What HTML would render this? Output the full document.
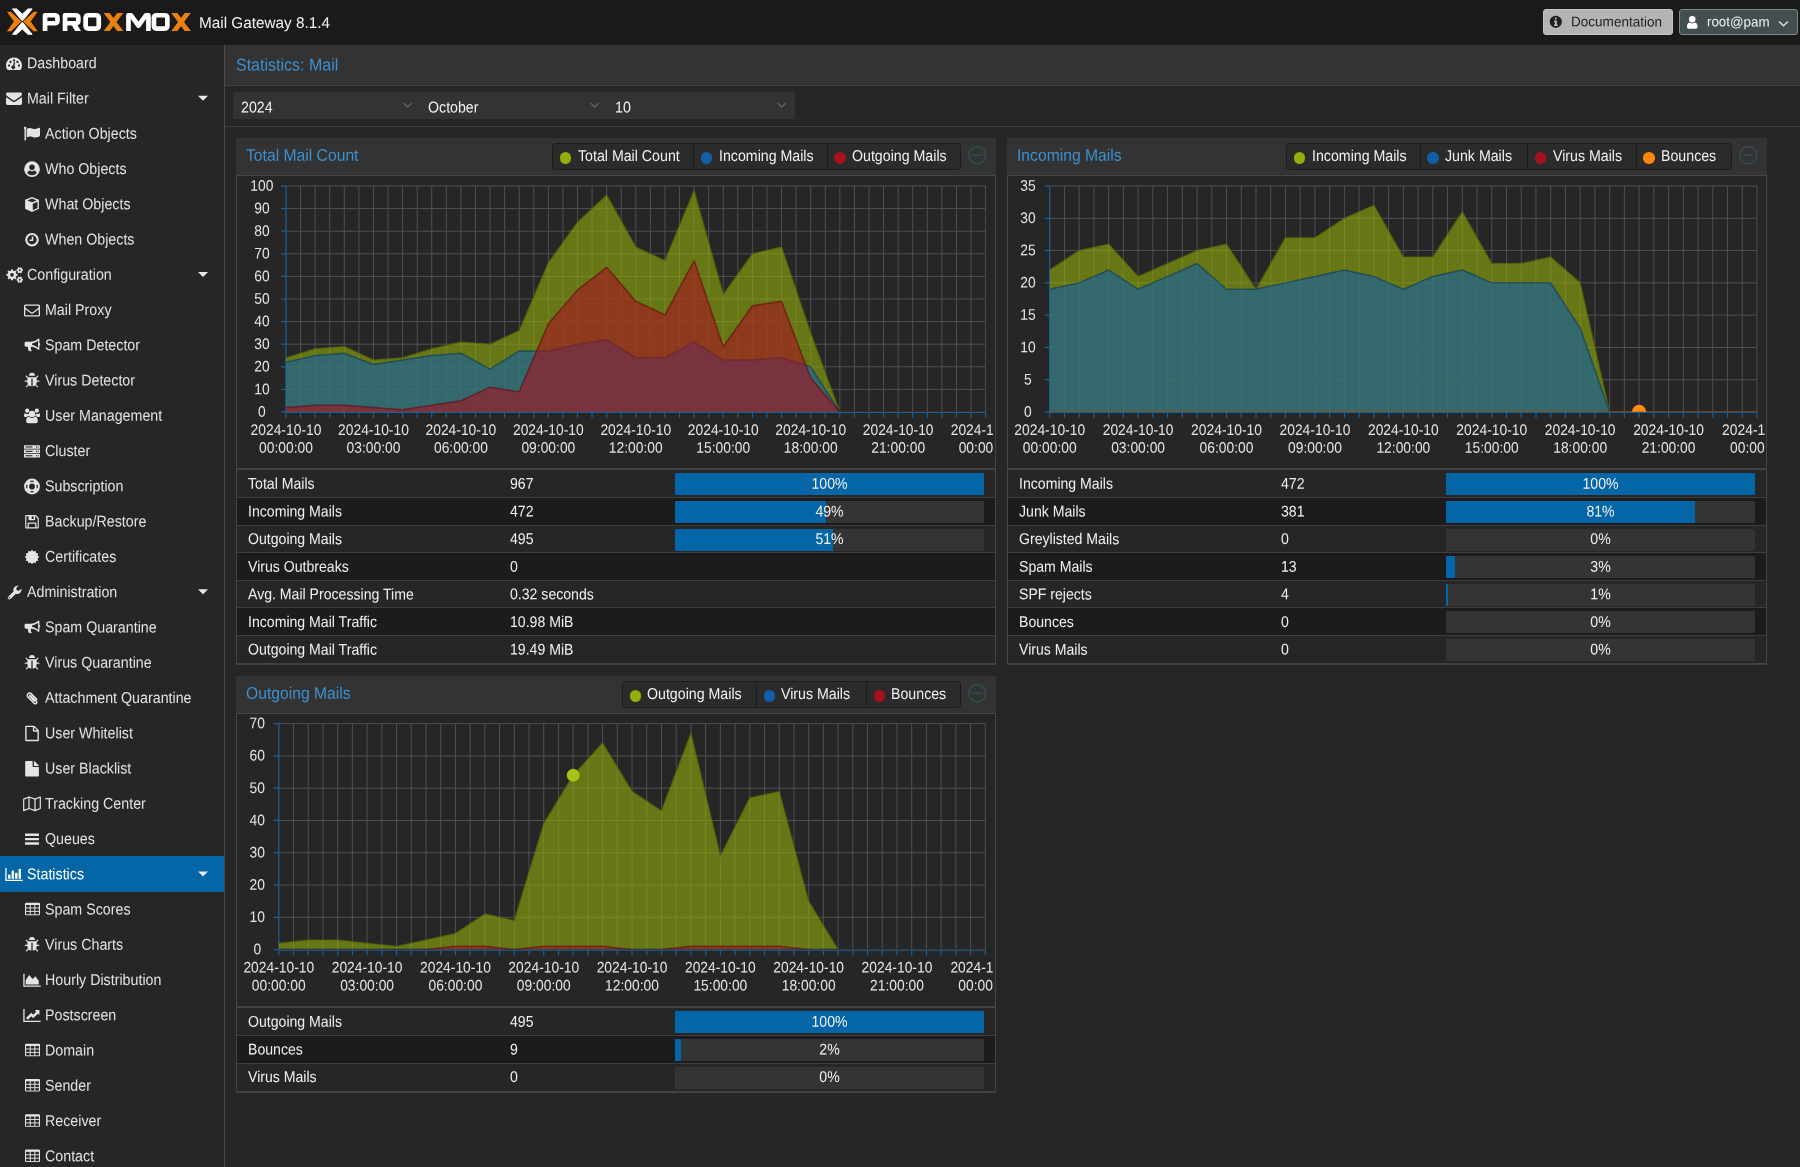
<!DOCTYPE html>
<html><head><meta charset="utf-8"><title>Proxmox Mail Gateway</title>
<style>
*{box-sizing:border-box;margin:0;padding:0}
html,body{width:1800px;height:1167px;overflow:hidden;background:#262626;font-family:"Liberation Sans",sans-serif;color:#f0f0f0}
body{position:relative;will-change:transform}
.ic{position:absolute;display:block;overflow:visible}
#hdr{position:absolute;left:0;top:0;width:1800px;height:45px;background:#1a1a1a}
#logo{position:absolute;left:0;top:0}
#ver{position:absolute;left:199px;top:13.2px;font-size:15.3px;line-height:18px;color:#f2f2f2;white-space:nowrap}
.btn{position:absolute;top:9px;height:26.4px;border-radius:3px;font-size:13.9px;line-height:24.4px;white-space:nowrap}
.btn span{position:absolute;top:0}
.btn.doc{left:1543.3px;width:130px;background:#b4b4b4;border:1px solid #c4c4c4;color:#1e1e1e}
.btn.doc span{left:27px;font-size:13.55px}
.btn.usr{left:1679.3px;width:119px;background:#434e51;border:1px solid #7f898b;color:#f0f0f0}
.btn.usr span{left:26.5px;font-size:13.35px}
.chev{position:absolute;left:98px;top:10px;width:11px;height:7.6px}
#side{position:absolute;left:0;top:0;width:224px;height:1167px}
#sideb{position:absolute;left:224px;top:45px;width:1.2px;height:1122px;background:#4a4a4a}
.row{position:absolute;left:0;width:224px;font-size:14.25px;color:#e2e2e2}
.row.sel{background:#0466a6;color:#fff}
.row .lbl{position:absolute;top:1px;line-height:35px;height:35px;white-space:nowrap}
.row .exp{position:absolute;left:198px;top:15.2px;width:0;height:0;border-left:5.6px solid transparent;border-right:5.6px solid transparent;border-top:5.6px solid #e8e8e8}
#ttl{position:absolute;left:225px;top:45px;width:1575px;height:41px;background:#333333;border-bottom:1px solid #424242}
#ttl span{position:absolute;left:10.7px;top:11.1px;font-size:16px;line-height:20px;color:#3c90d0;white-space:nowrap}
#tb{position:absolute;left:225px;top:86px;width:1575px;height:41px;background:#262626;border-bottom:1px solid #3e3e3e}
.combo{position:absolute;top:6.2px;width:187.3px;height:26.8px;background:#333333;font-size:14.2px;line-height:26.6px;color:#f0f0f0}
.combo span{position:absolute;left:7.4px;top:2.1px}
.trg{position:absolute;left:169.6px;top:9.6px;width:9.4px;height:6.6px}
.panel{position:absolute;background:#262626;overflow:hidden}
.ph{position:absolute;left:0;top:0;right:0;height:36.6px;background:#333333}
.pttl{position:absolute;left:9.6px;top:8.6px;font-size:15.7px;line-height:19px;color:#3c90d0;white-space:nowrap}
.tool{position:absolute;right:8.3px;top:7.3px;width:20.4px;height:20.4px}
.legend{position:absolute;height:27.2px;display:flex;background:#2b2b2b;border:1px solid #1c1c1c;border-radius:3.5px}
.li{position:relative;height:100%;border-right:1px solid #1c1c1c}
.li:last-child{border-right:none}
.dot{position:absolute;left:6.8px;top:8.7px;width:11.4px;height:11.4px;border-radius:50%}
.lt{position:absolute;left:24.7px;top:1px;font-size:14.2px;line-height:24.8px;color:#f0f0f0;white-space:nowrap}
.pbody{position:absolute;left:0;right:0;top:36.6px;bottom:0;border:1px solid #454545;border-bottom:2px solid #424242}
.sep{position:absolute;left:0;right:0;height:2px;background:#424242}
.chart{position:absolute;display:block;overflow:hidden}
.tk{font-family:"Liberation Sans",sans-serif;font-size:13.85px;fill:#e4e4e4}
.tr{position:absolute;left:1px;right:1px;background:#262626;border-top:1px solid #3e3e3e;font-size:14.1px;color:#f0f0f0}
.tr.alt{background:#1c1c1c}
.tr span{position:absolute;top:0;line-height:28px;height:28px;white-space:nowrap}
.c1{left:10.6px}.c2{left:272.3px}
.pb{position:absolute;left:437.6px;top:3px;width:309px;height:22px;background:#343434}
.pf{position:absolute;left:0;top:0;height:100%;background:#0466a6}
.pb .pt{left:0;right:0;text-align:center;top:-3px}

.tr.first{border-top-color:#424242}
.row .lbl,.tr span,.lt,.combo span,.btn span,#ver,#ttl span,.pttl{display:inline-block;transform-origin:50% 68%}
.lt{transform:matrix(1,0.0006,0,1.10,0,-1.0)}
.combo span{transform:matrix(1,0.0006,0,1.10,0,0.5)}
.btn span{transform:matrix(1,0.0006,0,1.03,0,0.4)}
#ver{transform:matrix(1,0.0006,0,1.02,0,0.9)}
#ttl span{transform:matrix(1,0.0006,0,1.065,0,-0.5)}
.pttl{transform:matrix(1,0.0006,0,1.065,0,-1.4)}
.tk{transform-box:fill-box;transform-origin:50% 85%;transform:matrix(1,0.0006,0,1.11,0,0)}

</style></head>
<body>
<div id="hdr"><svg id="logo" width="200" height="45" viewBox="0 0 200 45">
<g fill="#ffffff" stroke="#ffffff" stroke-width="1" stroke-linejoin="round">
<path d="M12.5 8.9H16.6L22.3 14.2L28 8.9H32.1L22.3 21.2Z"/>
<path d="M12.5 34.3H16.6L22.3 29L28 34.3H32.1L22.3 22Z"/>
</g>
<g fill="#e9800f" stroke="#2a1400" stroke-width="0.8" stroke-linejoin="round">
<path d="M7 11.4H11L22 21.55L11 31.7H7Q6.200 31.700 6.700 31L13.5 21.55L6.700 12.100Q6.200 11.400 7 11.400Z"/>
<path d="M37.600 11.400H33.600L22.600 21.550L33.600 31.700H37.600Q38.400 31.700 37.900 31L31.100 21.550L37.900 12.100Q38.400 11.400 37.600 11.400Z"/>
</g>
<g fill="none" stroke="#ffffff" stroke-width="4.700" stroke-linejoin="round" stroke-linecap="butt">
<path d="M45.050 31V15.250H54.600Q57.450 15.250 57.450 18V20.500Q57.450 23.250 54.600 23.250H45.050"/>
<path d="M65.050 31V15.250H75.500Q78.350 15.250 78.350 18V20.500Q78.350 23.250 75.500 23.250H65.050"/>
<path d="M88.450 15.250H95.950Q98.750 15.250 98.750 18.050V25.850Q98.750 28.650 95.950 28.650H88.450Q85.650 28.650 85.650 25.850V18.050Q85.650 15.250 88.450 15.250Z"/>
<path d="M128.450 31V15.250H131L138.450 25.600L145.900 15.250H148.450V31"/>
<path d="M156.750 15.250H164.550Q167.350 15.250 167.350 18.050V25.850Q167.350 28.650 164.550 28.650H156.750Q153.950 28.650 153.950 25.850V18.050Q153.950 15.250 156.750 15.250Z"/>
</g>
<path d="M70.500 23.250H76.300L81 31H75.200Z" fill="#ffffff"/>
<g fill="#e9800f">
<path d="M103.600 12.900H109.700L123.300 31H117.200Z"/><path d="M123.300 12.900H117.200L103.600 31H109.700Z"/>
<path d="M171.300 12.900H177.400L190.800 31H184.700Z"/><path d="M190.800 12.900H184.700L171.300 31H177.400Z"/>
</g>
</svg>
<span id="ver">Mail Gateway 8.1.4</span><div class="btn doc"><svg class="ic" style="left:4.6px;top:5.3px;width:13.60px;height:13.60px;" viewBox="0 0 16 16" fill="#1e1e1e" color="#1e1e1e" stroke="none"><circle cx="8" cy="8" r="7.200"/><g fill="#b4b4b4"><rect x="6.900" y="3.100" width="2.300" height="2.100"/><path d="M5.900 6.600h3.400v4.700h1v1.500H5.900v-1.500h1V8.100h-1z"/></g></svg><span>Documentation</span></div><div class="btn usr"><svg class="ic" style="left:4.8px;top:4.9px;width:14.50px;height:14.50px;" viewBox="0 0 16 16" fill="#ffffff" color="#ffffff" stroke="none"><circle cx="8" cy="4.600" r="3.600"/><path d="M2.100 13.300c0-2.400.7-5 3-5.100.7.600 1.700 1 2.900 1s2.200-.4 2.900-1c2.300.1 3 2.700 3 5.100 0 1.200-.8 1.900-2 1.900H4.100c-1.200 0-2-.7-2-1.900z"/></svg><span>root@pam</span><svg class="chev" viewBox="0 0 12 8"><path d="M1.2 1.5L6 6.2L10.8 1.5" fill="none" stroke="#e0e0e0" stroke-width="1.5"/></svg></div></div>
<div id="side"><div class="row" style="top:45px;height:36px"><svg class="ic" style="left:6px;top:9.6px;width:16.00px;height:16.00px;transform:translateY(0.40px);" viewBox="0 0 16 16" fill="#e4e4e4" color="#e4e4e4" stroke="none"><path d="M8 2.2C3.6 2.2 0 5.7 0 10.1c0 1.5 .4 2.9 1.2 4.1 .2 .3 .5 .5 .9 .5h11.8c.4 0 .7-.2 .9-.5 .8-1.2 1.2-2.6 1.200-4.100C16 5.700 12.400 2.200 8 2.200z"/><g fill="#262626"><circle cx="3" cy="10.200" r="1.150"/><circle cx="4.500" cy="6.600" r="1.150"/><circle cx="8" cy="5" r="1.150"/><circle cx="11.500" cy="6.600" r="1.150"/><circle cx="13" cy="10.200" r="1.150"/><path d="M9.300 6.800l-1 3.600a1.800 1.800 0 1 1-1.300-.3l1-3.600z"/></g></svg><span class="lbl" style="left:27px;transform:matrix(1,0.0006,0,1.10,0,0.40)">Dashboard</span></div>
<div class="row" style="top:80px;height:36px"><svg class="ic" style="left:6px;top:9.6px;width:16.00px;height:16.00px;transform:translateY(0.66px);" viewBox="0 0 16 16" fill="#e4e4e4" color="#e4e4e4" stroke="none"><path d="M0 4.100c0-.9.700-1.600 1.600-1.600h12.800c.9 0 1.600.7 1.600 1.600 0 .9-.6 1.700-1.300 2.200L9.600 9.800c-.4.300-1.100.8-1.600.8s-1.200-.5-1.600-.8L1.300 6.300C.7 5.900 0 5 0 4.100zM16 7v6.400c0 .9-.700 1.600-1.600 1.600H1.600C.700 15 0 14.300 0 13.400V7c.3.300.6.600 1 .8l4.700 3.300c.7.500 1.500 1 2.300 1s1.600-.5 2.300-1L15 7.800c.4-.200.700-.500 1-.8z" transform="translate(0,-.7)"/></svg><span class="lbl" style="left:27px;transform:matrix(1,0.0006,0,1.10,0,0.66)">Mail Filter</span><span class="exp" style="transform:translateY(0.66px)"></span></div>
<div class="row" style="top:115px;height:36px"><svg class="ic" style="left:24px;top:9.6px;width:16.00px;height:16.00px;transform:translateY(0.92px);" viewBox="0 0 16 16" fill="#e4e4e4" color="#e4e4e4" stroke="none"><circle cx="1.2" cy="2.1" r="1.25"/><rect x=".5" y="2.1" width="1.45" height="12.5" rx=".4"/><path d="M2.7 3.1c2-1.300 3.700-1.200 5.300-.5 1.900.800 3.900.900 6.900-.7.600-.3 1.100 0 1.100.6v7.100c0 .5-.3.800-.7 1-2.600 1.300-4.800 1.300-6.800.5-1.800-.7-3.500-.700-5.800.6z"/></svg><span class="lbl" style="left:45px;transform:matrix(1,0.0006,0,1.10,0,0.92)">Action Objects</span></div>
<div class="row" style="top:151px;height:35px"><svg class="ic" style="left:24px;top:9.6px;width:16.00px;height:16.00px;transform:translateY(0.18px);" viewBox="0 0 16 16" fill="#e4e4e4" color="#e4e4e4" stroke="none"><circle cx="8" cy="8" r="7.85"/><circle cx="8" cy="6.1" r="2.75" fill="#262626"/><path d="M3.3 11.900c.4-1.500 1.300-2.400 2.600-2.500.6.500 1.300.800 2.100.8s1.500-.3 2.100-.8c1.300.1 2.200 1 2.600 2.500a6.100 6.100 0 0 1-9.400 0z" fill="#262626"/></svg><span class="lbl" style="left:45px;transform:matrix(1,0.0006,0,1.10,0,0.18)">Who Objects</span></div>
<div class="row" style="top:186px;height:36px"><svg class="ic" style="left:24px;top:9.6px;width:16.00px;height:16.00px;transform:translateY(0.44px);" viewBox="0 0 16 16" fill="#e4e4e4" color="#e4e4e4" stroke="none"><path d="M8 .6l6.900 2.800v8.900L8 15.500 1.100 12.300V3.400z"/><path d="M8 2.100l4.700 1.900L8 5.900 3.300 4z" fill="#262626"/><path d="M8.800 7.300l4.700-1.900v6.100l-4.700 2.200z" fill="#262626"/></svg><span class="lbl" style="left:45px;transform:matrix(1,0.0006,0,1.10,0,0.44)">What Objects</span></div>
<div class="row" style="top:221px;height:36px"><svg class="ic" style="left:24px;top:9.6px;width:16.00px;height:16.00px;transform:translateY(0.70px);" viewBox="0 0 16 16" fill="#e4e4e4" color="#e4e4e4" stroke="none"><path fill-rule="evenodd" d="M8 1.200a6.800 6.800 0 1 1 0 13.600A6.800 6.800 0 0 1 8 1.200zm0 2.100a4.700 4.700 0 1 0 0 9.400A4.700 4.700 0 0 0 8 3.300zm-.2 1.400h1.500v4.500H5.600V7.700h2.200z"/></svg><span class="lbl" style="left:45px;transform:matrix(1,0.0006,0,1.10,0,0.70)">When Objects</span></div>
<div class="row" style="top:256px;height:36px"><svg class="ic" style="left:5.8px;top:9.6px;width:17.00px;height:16.00px;transform:translateY(0.96px);" viewBox="0 0 17 16" fill="#e4e4e4" color="#e4e4e4" stroke="none"><circle cx="6" cy="7.9" r="4.0"/><path d="M9.87 6.87L11.42 6.83L11.42 8.97L9.87 8.93L9.46 9.91L10.58 10.98L9.08 12.48L8.01 11.36L7.03 11.77L7.07 13.32L4.93 13.32L4.97 11.77L3.99 11.36L2.92 12.48L1.42 10.98L2.54 9.91L2.13 8.93L0.58 8.97L0.58 6.83L2.13 6.87L2.54 5.89L1.42 4.82L2.92 3.32L3.99 4.44L4.97 4.03L4.93 2.48L7.07 2.48L7.03 4.03L8.01 4.44L9.08 3.32L10.58 4.82L9.46 5.89Z"/><circle cx="6" cy="7.9" r="1.85" fill="#262626"/><circle cx="13.75" cy="3.2" r="2.25"/><path d="M15.84 2.37L16.88 2.29L16.88 4.11L15.84 4.03L15.51 4.60L16.10 5.46L14.53 6.37L14.08 5.43L13.42 5.43L12.97 6.37L11.40 5.46L11.99 4.60L11.66 4.03L10.62 4.11L10.62 2.29L11.66 2.37L11.99 1.80L11.40 0.94L12.97 0.03L13.42 0.97L14.08 0.97L14.53 0.03L16.10 0.94L15.51 1.80Z"/><circle cx="13.75" cy="3.2" r="0.95" fill="#262626"/><circle cx="13.75" cy="12.8" r="2.25"/><path d="M15.84 11.97L16.88 11.89L16.88 13.71L15.84 13.63L15.51 14.20L16.10 15.06L14.53 15.97L14.08 15.03L13.42 15.03L12.97 15.97L11.40 15.06L11.99 14.20L11.66 13.63L10.62 13.71L10.62 11.89L11.66 11.97L11.99 11.40L11.40 10.54L12.97 9.63L13.42 10.57L14.08 10.57L14.53 9.63L16.10 10.54L15.51 11.40Z"/><circle cx="13.75" cy="12.8" r="0.95" fill="#262626"/></svg><span class="lbl" style="left:27px;transform:matrix(1,0.0006,0,1.10,0,0.96)">Configuration</span><span class="exp" style="transform:translateY(0.96px)"></span></div>
<div class="row" style="top:292px;height:35px"><svg class="ic" style="left:24px;top:9.6px;width:16.00px;height:16.00px;transform:translateY(0.22px);" viewBox="0 0 16 16" fill="#e4e4e4" color="#e4e4e4" stroke="none"><path fill-rule="evenodd" d="M1.600 2.300h12.800c.9 0 1.600.7 1.600 1.600v8.800c0 .9-.700 1.600-1.600 1.600H1.600C.700 14.300 0 13.600 0 12.700V3.900c0-.9.700-1.600 1.600-1.600zM1.300 3.600v1c0 .5.300 1 .8 1.400L7 9.700c.6.400 1.400.4 2 0l4.900-3.700c.5-.4.800-.9.800-1.400v-1zM1.300 7.100v5.900h13.400V7.100l-5 3.700c-1 .8-2.400.8-3.400 0z"/></svg><span class="lbl" style="left:45px;transform:matrix(1,0.0006,0,1.10,0,0.22)">Mail Proxy</span></div>
<div class="row" style="top:327px;height:36px"><svg class="ic" style="left:24px;top:9.6px;width:16.00px;height:16.00px;transform:translateY(0.48px);" viewBox="0 0 16 16" fill="#e4e4e4" color="#e4e4e4" stroke="none"><path d="M14.500 1c.5 0 .9.400.900.9v3.600a1.300 1.300 0 0 1 0 2.400v3.600c0 .5-.4.900-.9.900-2.400-2-4.700-2.900-7.100-3.100-.8.300-.9 1-.4 1.600-.4.700.1 1.400.8 2-.5 1-2.200 1.100-3.100.4-.4-1.400-1.100-2.700-.7-4.100H1.900C1.200 9.200.6 8.700.6 8V5.400c0-.7.600-1.200 1.300-1.200h4.600c2.700 0 5.300-1 8-3.200z"/><path d="M14.100 3.200c-2 1.500-4 2.400-6 2.700v1.600c2 .3 4 1.200 6 2.700z" fill="#262626"/></svg><span class="lbl" style="left:45px;transform:matrix(1,0.0006,0,1.10,0,0.48)">Spam Detector</span></div>
<div class="row" style="top:362px;height:36px"><svg class="ic" style="left:24px;top:9.6px;width:16.00px;height:16.00px;transform:translateY(0.74px);" viewBox="0 0 16 16" fill="#e4e4e4" color="#e4e4e4" stroke="none"><g transform="translate(8 8) scale(1.07 1.05) translate(-8 -8.3)"><path d="M5.200 3.600a2.800 2.800 0 0 1 5.600 0zM15 8.700c0 .3-.3.600-.6.600h-2c0 1.100-.2 1.900-.6 2.500l1.900 1.900a.6.600 0 0 1-.8.800l-1.800-1.800c-.6.500-1.500 1-2.500 1V6.300H7.400v7.400c-1.100 0-2-.5-2.600-1L3.100 14.500a.6.600 0 0 1-.8-.8l1.900-2c-.3-.6-.5-1.400-.5-2.400h-2a.6.600 0 0 1 0-1.200h2V5.700L2.100 4.200a.6.600 0 0 1 .8-.8l1.500 1.500h7.200l1.500-1.500a.6.600 0 0 1 .8.800L12.400 5.700v2.400h2c.3 0 .6.300.6.600z"/></g></svg><span class="lbl" style="left:45px;transform:matrix(1,0.0006,0,1.10,0,0.74)">Virus Detector</span></div>
<div class="row" style="top:397px;height:36px"><svg class="ic" style="left:24px;top:9.6px;width:16.00px;height:16.00px;transform:translateY(1.00px);" viewBox="0 0 16 16" fill="#e4e4e4" color="#e4e4e4" stroke="none"><path d="M4.900 8c-.9 0-1.700.4-2.200 1.100H1.600C.7 9.100 0 8.700 0 7.800 0 7 0 5.200 1.200 5.200c.2 0 1.200.8 2.500.8.400 0 .9-.1 1.300-.2 0 .8.200 1.600.700 2.200zM13.800 13.300c0 1.300-.8 2-2.100 2H4.300c-1.200 0-2.100-.7-2.100-2 0-1.800.4-4.500 2.700-4.500.3 0 1.300 1.100 3.100 1.100s2.800-1.100 3.100-1.100c2.300 0 2.700 2.700 2.700 4.500zM5.300 2.700a2.100 2.100 0 1 1-4.200 0 2.100 2.100 0 0 1 4.200 0zM11.200 5.900a3.200 3.200 0 1 1-6.400 0 3.200 3.200 0 0 1 6.400 0zM16 7.800c0 .9-.7 1.300-1.600 1.300h-1.100C12.800 8.400 12 8 11.100 8c.4-.6.700-1.400.700-2.200.4.100.8.200 1.300.2 1.300 0 2.300-.8 2.500-.8C16 5.200 16 7 16 7.800zM14.900 2.700a2.100 2.100 0 1 1-4.200 0 2.100 2.100 0 0 1 4.200 0z"/></svg><span class="lbl" style="left:45px;transform:matrix(1,0.0006,0,1.10,0,1.00)">User Management</span></div>
<div class="row" style="top:433px;height:36px"><svg class="ic" style="left:24px;top:9.6px;width:16.00px;height:16.00px;transform:translateY(0.26px);" viewBox="0 0 16 16" fill="#e4e4e4" color="#e4e4e4" stroke="none"><rect x="0" y="1.900" width="16" height="3.600" rx=".5"/><rect x="0" y="6.300" width="16" height="3.600" rx=".5"/><rect x="0" y="10.700" width="16" height="3.600" rx=".5"/><g fill="#262626"><rect x="1.500" y="3.150" width="7" height="1.100"/><rect x="1.500" y="7.550" width="7" height="1.100"/><rect x="1.500" y="11.950" width="7" height="1.100"/><rect x="11.800" y="3.150" width="1.100" height="1.100"/><rect x="13.700" y="3.150" width="1.100" height="1.100"/><rect x="11.800" y="7.550" width="1.100" height="1.100"/><rect x="13.700" y="7.550" width="1.100" height="1.100"/><rect x="11.800" y="11.950" width="1.100" height="1.100"/><rect x="13.700" y="11.950" width="1.100" height="1.100"/></g></svg><span class="lbl" style="left:45px;transform:matrix(1,0.0006,0,1.10,0,0.26)">Cluster</span></div>
<div class="row" style="top:468px;height:36px"><svg class="ic" style="left:24px;top:9.6px;width:16.00px;height:16.00px;transform:translateY(0.52px);" viewBox="0 0 16 16" fill="#e4e4e4" color="#e4e4e4" stroke="none"><path fill-rule="evenodd" d="M8 .1a7.900 7.900 0 1 1 0 15.800A7.900 7.900 0 0 1 8 .1zm0 5a2.900 2.900 0 1 0 0 5.800 2.900 2.900 0 0 0 0-5.800z"/><g fill="#262626"><rect x="6.300" y="2.200" width="3.400" height="1.200"/><rect x="6.300" y="12.600" width="3.400" height="1.200"/><rect x="2.200" y="6.300" width="1.200" height="3.400"/><rect x="12.600" y="6.300" width="1.200" height="3.400"/></g></svg><span class="lbl" style="left:45px;transform:matrix(1,0.0006,0,1.10,0,0.52)">Subscription</span></div>
<div class="row" style="top:503px;height:36px"><svg class="ic" style="left:24px;top:9.6px;width:16.00px;height:16.00px;transform:translateY(0.78px);" viewBox="0 0 16 16" fill="#e4e4e4" color="#e4e4e4" stroke="none"><path fill-rule="evenodd" d="M2.100 1.300h9.100c.4 0 .9.200 1.200.5l1.900 1.900c.3.300.5.800.5 1.200v8.900c0 .5-.4.900-.9.900H2.100c-.5 0-.9-.4-.9-.9V2.200c0-.5.400-.9.900-.9zM2.400 2.500v11h1.200V9.700c0-.5.400-.9.900-.9h7c.5 0 .9.400.9.900v3.800h1.200V5c0-.2-.1-.4-.2-.5l-1.800-1.800c-.1-.1-.2-.2-.4-.2v3c0 .5-.4.900-.9.900H5.400c-.5 0-.9-.4-.9-.9v-3zM4.800 10v3.500h6.400V10zM7.700 2.500h1.900v2.700H7.700z"/></svg><span class="lbl" style="left:45px;transform:matrix(1,0.0006,0,1.10,0,0.78)">Backup/Restore</span></div>
<div class="row" style="top:539px;height:35px"><svg class="ic" style="left:24px;top:9.6px;width:16.00px;height:16.00px;transform:translateY(0.04px);" viewBox="0 0 16 16" fill="#e4e4e4" color="#e4e4e4" stroke="none"><path d="M8.00 0.70L9.48 2.49L11.65 1.68L12.03 3.97L14.32 4.35L13.51 6.52L15.30 8.00L13.51 9.48L14.32 11.65L12.03 12.03L11.65 14.32L9.48 13.51L8.00 15.30L6.52 13.51L4.35 14.32L3.97 12.03L1.68 11.65L2.49 9.48L0.70 8.00L2.49 6.52L1.68 4.35L3.97 3.97L4.35 1.68L6.52 2.49Z" stroke-linejoin="round"/></svg><span class="lbl" style="left:45px;transform:matrix(1,0.0006,0,1.10,0,0.04)">Certificates</span></div>
<div class="row" style="top:574px;height:36px"><svg class="ic" style="left:6px;top:9.6px;width:16.00px;height:16.00px;transform:translateY(0.30px);" viewBox="0 0 16 16" fill="#e4e4e4" color="#e4e4e4" stroke="none"><g transform="translate(1.4,.6) scale(.92)"><path d="M15.300 4.200c.3 1.500-.1 3.100-1.300 4.300-1.300 1.300-3.200 1.700-4.800 1.100l-5.800 5.800c-.7.700-1.800.7-2.500 0s-.7-1.800 0-2.500l5.800-5.800C6.100 5.500 6.500 3.600 7.800 2.300 9 1.100 10.600.7 12.100 1L9.600 3.500l.5 2.400 2.400.5z"/><circle cx="2.200" cy="14" r=".75" fill="#262626"/></g></svg><span class="lbl" style="left:27px;transform:matrix(1,0.0006,0,1.10,0,0.30)">Administration</span><span class="exp" style="transform:translateY(0.30px)"></span></div>
<div class="row" style="top:609px;height:36px"><svg class="ic" style="left:24px;top:9.6px;width:16.00px;height:16.00px;transform:translateY(0.56px);" viewBox="0 0 16 16" fill="#e4e4e4" color="#e4e4e4" stroke="none"><path d="M14.500 1c.5 0 .9.400.900.9v3.600a1.300 1.300 0 0 1 0 2.400v3.600c0 .5-.4.900-.9.900-2.400-2-4.700-2.900-7.100-3.100-.8.300-.9 1-.4 1.600-.4.700.1 1.400.8 2-.5 1-2.200 1.100-3.100.4-.4-1.400-1.100-2.700-.7-4.100H1.900C1.200 9.200.6 8.700.6 8V5.400c0-.7.600-1.200 1.300-1.200h4.600c2.700 0 5.300-1 8-3.200z"/><path d="M14.100 3.200c-2 1.500-4 2.400-6 2.700v1.600c2 .3 4 1.200 6 2.700z" fill="#262626"/></svg><span class="lbl" style="left:45px;transform:matrix(1,0.0006,0,1.10,0,0.56)">Spam Quarantine</span></div>
<div class="row" style="top:644px;height:36px"><svg class="ic" style="left:24px;top:9.6px;width:16.00px;height:16.00px;transform:translateY(0.82px);" viewBox="0 0 16 16" fill="#e4e4e4" color="#e4e4e4" stroke="none"><g transform="translate(8 8) scale(1.07 1.05) translate(-8 -8.3)"><path d="M5.200 3.600a2.800 2.800 0 0 1 5.600 0zM15 8.700c0 .3-.3.600-.6.600h-2c0 1.100-.2 1.900-.6 2.500l1.900 1.900a.6.600 0 0 1-.8.800l-1.800-1.800c-.6.500-1.500 1-2.500 1V6.300H7.400v7.400c-1.100 0-2-.5-2.600-1L3.100 14.500a.6.600 0 0 1-.8-.8l1.900-2c-.3-.6-.5-1.400-.5-2.400h-2a.6.600 0 0 1 0-1.200h2V5.700L2.100 4.200a.6.600 0 0 1 .8-.8l1.500 1.500h7.200l1.500-1.500a.6.600 0 0 1 .8.800L12.400 5.700v2.400h2c.3 0 .6.300.6.600z"/></g></svg><span class="lbl" style="left:45px;transform:matrix(1,0.0006,0,1.10,0,0.82)">Virus Quarantine</span></div>
<div class="row" style="top:680px;height:35px"><svg class="ic" style="left:24px;top:9.6px;width:16.00px;height:16.00px;transform:translateY(0.08px);" viewBox="0 0 16 16" fill="#e4e4e4" color="#e4e4e4" stroke="none"><path fill="none" stroke-width="1.500" stroke-linecap="round" stroke-linejoin="round" d="M12.700 9.300L7.400 3.800c-1-1-2.500-1-3.400-.1-.9.900-.9 2.400.1 3.400l6 6.100c.6.600 1.600.7 2.200.1.600-.6.600-1.600-.1-2.200L6.700 5.600c-.3-.3-.7-.3-.9-.1-.2.300-.2.600.1.900l4.400 4.500" stroke="currentColor"/></svg><span class="lbl" style="left:45px;transform:matrix(1,0.0006,0,1.10,0,0.08)">Attachment Quarantine</span></div>
<div class="row" style="top:715px;height:36px"><svg class="ic" style="left:24px;top:9.6px;width:16.00px;height:16.00px;transform:translateY(0.34px);" viewBox="0 0 16 16" fill="#e4e4e4" color="#e4e4e4" stroke="none"><path fill-rule="evenodd" d="M2.100.3h7.700c.4 0 .8.200 1.100.5l3.500 3.500c.3.300.5.700.5 1.100v9.600c0 .5-.4.900-.9.900H2.100c-.5 0-.9-.4-.9-.9V1.200c0-.5.400-.9.900-.9zM2.600 1.700v12.800h10.900V6.300H9.800c-.5 0-.9-.4-.9-.9V1.700zM10.200 2v2.900h2.900z"/></svg><span class="lbl" style="left:45px;transform:matrix(1,0.0006,0,1.10,0,0.34)">User Whitelist</span></div>
<div class="row" style="top:750px;height:36px"><svg class="ic" style="left:24px;top:9.6px;width:16.00px;height:16.00px;transform:translateY(0.60px);" viewBox="0 0 16 16" fill="#e4e4e4" color="#e4e4e4" stroke="none"><path d="M2.100.3h6.500v5.200c0 .5.400.9.900.9h5.400v8.600c0 .5-.4.900-.9.900H2.100c-.5 0-.9-.4-.9-.9V1.200c0-.5.400-.9.900-.9zM9.900.4c.4.100.700.300 1 .6l3.400 3.400c.3.300.5.600.6 1H9.900z"/></svg><span class="lbl" style="left:45px;transform:matrix(1,0.0006,0,1.10,0,0.60)">User Blacklist</span></div>
<div class="row" style="top:785px;height:36px"><svg class="ic" style="left:22.8px;top:9.6px;width:18.00px;height:16.00px;transform:translateY(0.86px);" viewBox="0 0 18 16" fill="#e4e4e4" color="#e4e4e4" stroke="none"><path fill="none" stroke-width="1.200" stroke-linejoin="round" stroke="currentColor" d="M.7 3.300L6 1.100 12 3.300 17.300 1.100V12.600L12 14.800 6 12.600.7 14.800ZM6 1.100V12.600M12 3.300V14.800"/></svg><span class="lbl" style="left:45px;transform:matrix(1,0.0006,0,1.10,0,0.86)">Tracking Center</span></div>
<div class="row" style="top:821px;height:35px"><svg class="ic" style="left:24px;top:9.6px;width:16.00px;height:16.00px;transform:translateY(0.12px);" viewBox="0 0 16 16" fill="#e4e4e4" color="#e4e4e4" stroke="none"><rect x="1" y="2.400" width="14" height="2.400" rx=".3"/><rect x="1" y="6.800" width="14" height="2.400" rx=".3"/><rect x="1" y="11.200" width="14" height="2.400" rx=".3"/></svg><span class="lbl" style="left:45px;transform:matrix(1,0.0006,0,1.10,0,0.12)">Queues</span></div>
<div class="row sel" style="top:856px;height:36px"><svg class="ic" style="left:4.8px;top:9.6px;width:18.00px;height:16.00px;transform:translateY(0.38px);" viewBox="0 0 18 16" fill="#ffffff" color="#ffffff" stroke="none"><path d="M.3 1.700h1.300v11.600H17.700v1.300H.3z"/><rect x="3.100" y="8.300" width="2.400" height="4.100"/><rect x="6.600" y="4.200" width="2.400" height="8.200"/><rect x="10.100" y="6.400" width="2.400" height="6"/><rect x="13.600" y="2.600" width="2.400" height="9.800"/></svg><span class="lbl" style="left:27px;transform:matrix(1,0.0006,0,1.10,0,0.38)">Statistics</span><span class="exp" style="transform:translateY(0.38px)"></span></div>
<div class="row" style="top:891px;height:36px"><svg class="ic" style="left:24px;top:9.6px;width:16.00px;height:16.00px;transform:translateY(0.64px);" viewBox="0 0 16 16" fill="#e4e4e4" color="#e4e4e4" stroke="none"><rect x="1" y="1.06" width="15" height="12.6" rx="1.1"/><g fill="#262626"><rect x="2.1" y="3.36" width="3.6" height="2.47"/><rect x="6.7" y="3.36" width="3.6" height="2.47"/><rect x="11.3" y="3.36" width="3.6" height="2.47"/><rect x="2.1" y="6.78" width="3.6" height="2.47"/><rect x="6.7" y="6.78" width="3.6" height="2.47"/><rect x="11.3" y="6.78" width="3.6" height="2.47"/><rect x="2.1" y="10.2" width="3.6" height="2.47"/><rect x="6.7" y="10.2" width="3.6" height="2.47"/><rect x="11.3" y="10.2" width="3.6" height="2.47"/></g></svg><span class="lbl" style="left:45px;transform:matrix(1,0.0006,0,1.10,0,0.64)">Spam Scores</span></div>
<div class="row" style="top:926px;height:36px"><svg class="ic" style="left:24px;top:9.6px;width:16.00px;height:16.00px;transform:translateY(0.90px);" viewBox="0 0 16 16" fill="#e4e4e4" color="#e4e4e4" stroke="none"><g transform="translate(8 8) scale(1.07 1.05) translate(-8 -8.3)"><path d="M5.200 3.600a2.800 2.800 0 0 1 5.600 0zM15 8.700c0 .3-.3.600-.6.600h-2c0 1.100-.2 1.900-.6 2.500l1.900 1.900a.6.600 0 0 1-.8.800l-1.800-1.800c-.6.500-1.500 1-2.500 1V6.300H7.400v7.400c-1.100 0-2-.5-2.600-1L3.100 14.500a.6.600 0 0 1-.8-.8l1.900-2c-.3-.6-.5-1.400-.5-2.400h-2a.6.600 0 0 1 0-1.200h2V5.700L2.100 4.200a.6.600 0 0 1 .8-.8l1.500 1.500h7.200l1.500-1.500a.6.600 0 0 1 .8.800L12.400 5.700v2.400h2c.3 0 .6.300.6.600z"/></g></svg><span class="lbl" style="left:45px;transform:matrix(1,0.0006,0,1.10,0,0.90)">Virus Charts</span></div>
<div class="row" style="top:962px;height:35px"><svg class="ic" style="left:22.8px;top:9.6px;width:18.00px;height:16.00px;transform:translateY(0.16px);" viewBox="0 0 18 16" fill="#e4e4e4" color="#e4e4e4" stroke="none"><path d="M.3 1.700h1.300v11.600H17.700v1.300H.3z"/><path d="M2.700 12.400V8.200L6.100 2.800l3.700 4 2.600-2.600 3.400 4.700v3.500z"/></svg><span class="lbl" style="left:45px;transform:matrix(1,0.0006,0,1.10,0,0.16)">Hourly Distribution</span></div>
<div class="row" style="top:997px;height:36px"><svg class="ic" style="left:22.8px;top:9.6px;width:18.00px;height:16.00px;transform:translateY(0.42px);" viewBox="0 0 18 16" fill="#e4e4e4" color="#e4e4e4" stroke="none"><path d="M.3 1.700h1.300v11.600H17.700v1.300H.3z"/><path d="M16.400 3v3.900c0 .3-.3.400-.5.200l-1.100-1.100-4.400 4.400c-.1.100-.3.100-.4 0L8.200 8.600 4.800 12 3 10.200l5-5c.1-.1.3-.1.400 0l1.800 1.800 3-3-1.100-1.100c-.2-.2-.1-.5.200-.5h3.900c.1 0 .2.100.2.200z" transform="translate(0,.3)"/></svg><span class="lbl" style="left:45px;transform:matrix(1,0.0006,0,1.10,0,0.42)">Postscreen</span></div>
<div class="row" style="top:1032px;height:36px"><svg class="ic" style="left:24px;top:9.6px;width:16.00px;height:16.00px;transform:translateY(0.68px);" viewBox="0 0 16 16" fill="#e4e4e4" color="#e4e4e4" stroke="none"><rect x="1" y="1.06" width="15" height="12.6" rx="1.1"/><g fill="#262626"><rect x="2.1" y="3.36" width="3.6" height="2.47"/><rect x="6.7" y="3.36" width="3.6" height="2.47"/><rect x="11.3" y="3.36" width="3.6" height="2.47"/><rect x="2.1" y="6.78" width="3.6" height="2.47"/><rect x="6.7" y="6.78" width="3.6" height="2.47"/><rect x="11.3" y="6.78" width="3.6" height="2.47"/><rect x="2.1" y="10.2" width="3.6" height="2.47"/><rect x="6.7" y="10.2" width="3.6" height="2.47"/><rect x="11.3" y="10.2" width="3.6" height="2.47"/></g></svg><span class="lbl" style="left:45px;transform:matrix(1,0.0006,0,1.10,0,0.68)">Domain</span></div>
<div class="row" style="top:1067px;height:36px"><svg class="ic" style="left:24px;top:9.6px;width:16.00px;height:16.00px;transform:translateY(0.94px);" viewBox="0 0 16 16" fill="#e4e4e4" color="#e4e4e4" stroke="none"><rect x="1" y="1.06" width="15" height="12.6" rx="1.1"/><g fill="#262626"><rect x="2.1" y="3.36" width="3.6" height="2.47"/><rect x="6.7" y="3.36" width="3.6" height="2.47"/><rect x="11.3" y="3.36" width="3.6" height="2.47"/><rect x="2.1" y="6.78" width="3.6" height="2.47"/><rect x="6.7" y="6.78" width="3.6" height="2.47"/><rect x="11.3" y="6.78" width="3.6" height="2.47"/><rect x="2.1" y="10.2" width="3.6" height="2.47"/><rect x="6.7" y="10.2" width="3.6" height="2.47"/><rect x="11.3" y="10.2" width="3.6" height="2.47"/></g></svg><span class="lbl" style="left:45px;transform:matrix(1,0.0006,0,1.10,0,0.94)">Sender</span></div>
<div class="row" style="top:1103px;height:35px"><svg class="ic" style="left:24px;top:9.6px;width:16.00px;height:16.00px;transform:translateY(0.20px);" viewBox="0 0 16 16" fill="#e4e4e4" color="#e4e4e4" stroke="none"><rect x="1" y="1.06" width="15" height="12.6" rx="1.1"/><g fill="#262626"><rect x="2.1" y="3.36" width="3.6" height="2.47"/><rect x="6.7" y="3.36" width="3.6" height="2.47"/><rect x="11.3" y="3.36" width="3.6" height="2.47"/><rect x="2.1" y="6.78" width="3.6" height="2.47"/><rect x="6.7" y="6.78" width="3.6" height="2.47"/><rect x="11.3" y="6.78" width="3.6" height="2.47"/><rect x="2.1" y="10.2" width="3.6" height="2.47"/><rect x="6.7" y="10.2" width="3.6" height="2.47"/><rect x="11.3" y="10.2" width="3.6" height="2.47"/></g></svg><span class="lbl" style="left:45px;transform:matrix(1,0.0006,0,1.10,0,0.20)">Receiver</span></div>
<div class="row" style="top:1138px;height:36px"><svg class="ic" style="left:24px;top:9.6px;width:16.00px;height:16.00px;transform:translateY(0.46px);" viewBox="0 0 16 16" fill="#e4e4e4" color="#e4e4e4" stroke="none"><rect x="1" y="1.06" width="15" height="12.6" rx="1.1"/><g fill="#262626"><rect x="2.1" y="3.36" width="3.6" height="2.47"/><rect x="6.7" y="3.36" width="3.6" height="2.47"/><rect x="11.3" y="3.36" width="3.6" height="2.47"/><rect x="2.1" y="6.78" width="3.6" height="2.47"/><rect x="6.7" y="6.78" width="3.6" height="2.47"/><rect x="11.3" y="6.78" width="3.6" height="2.47"/><rect x="2.1" y="10.2" width="3.6" height="2.47"/><rect x="6.7" y="10.2" width="3.6" height="2.47"/><rect x="11.3" y="10.2" width="3.6" height="2.47"/></g></svg><span class="lbl" style="left:45px;transform:matrix(1,0.0006,0,1.10,0,0.46)">Contact</span></div></div>
<div id="sideb"></div>
<div id="ttl"><span>Statistics: Mail</span></div>
<div id="tb"><div class="combo" style="left:8.3px"><span>2024</span><svg class="trg" viewBox="0 0 12 8"><path d="M1 1.2L6 6.2L11 1.2" fill="none" stroke="#747474" stroke-width="1.3"/></svg></div><div class="combo" style="left:195.6px"><span>October</span><svg class="trg" viewBox="0 0 12 8"><path d="M1 1.2L6 6.2L11 1.2" fill="none" stroke="#747474" stroke-width="1.3"/></svg></div><div class="combo" style="left:382.9px"><span>10</span><svg class="trg" viewBox="0 0 12 8"><path d="M1 1.2L6 6.2L11 1.2" fill="none" stroke="#747474" stroke-width="1.3"/></svg></div></div>
<div class="panel" style="left:236.3px;top:138px;width:759.7px;height:527px"><div class="ph"><span class="pttl">Total Mail Count</span><div class="legend" style="right:35.2px;top:4.6px"><div class="li" style="width:140.8px"><span class="dot" style="background:#94ae0a"></span><span class="lt">Total Mail Count</span></div><div class="li" style="width:133.7px"><span class="dot" style="background:#115fa6"></span><span class="lt">Incoming Mails</span></div><div class="li" style="width:132.3px"><span class="dot" style="background:#a61120"></span><span class="lt">Outgoing Mails</span></div></div><svg class="tool" viewBox="0 0 20 20"><circle cx="10" cy="10" r="8.3" fill="none" stroke="#2f4f57" stroke-width="1.3"/><path d="M5 10H15" stroke="#2f4f57" stroke-width="1.3"/></svg></div><div class="pbody"></div><div class="sep" style="top:330.00px"></div><div class="tr first" style="top:331px;height:28px"><span class="c1" style="transform:matrix(1,0.0006,0,1.10,0,-0.15)">Total Mails</span><span class="c2" style="transform:matrix(1,0.0006,0,1.10,0,-0.15)">967</span><div class="pb"><div class="pf" style="width:309px"></div><span class="pt" style="transform:matrix(1,0.0006,0,1.10,0,-0.15)">100%</span></div></div><div class="tr alt" style="top:359px;height:28px"><span class="c1" style="transform:matrix(1,0.0006,0,1.10,0,-0.52)">Incoming Mails</span><span class="c2" style="transform:matrix(1,0.0006,0,1.10,0,-0.52)">472</span><div class="pb"><div class="pf" style="width:151px"></div><span class="pt" style="transform:matrix(1,0.0006,0,1.10,0,-0.52)">49%</span></div></div><div class="tr" style="top:387px;height:27px"><span class="c1" style="transform:matrix(1,0.0006,0,1.10,0,-0.89)">Outgoing Mails</span><span class="c2" style="transform:matrix(1,0.0006,0,1.10,0,-0.89)">495</span><div class="pb"><div class="pf" style="width:158px"></div><span class="pt" style="transform:matrix(1,0.0006,0,1.10,0,-0.89)">51%</span></div></div><div class="tr alt" style="top:414px;height:28px"><span class="c1" style="transform:matrix(1,0.0006,0,1.10,0,-0.26)">Virus Outbreaks</span><span class="c2" style="transform:matrix(1,0.0006,0,1.10,0,-0.26)">0</span></div><div class="tr" style="top:442px;height:27px"><span class="c1" style="transform:matrix(1,0.0006,0,1.10,0,-0.63)">Avg. Mail Processing Time</span><span class="c2" style="transform:matrix(1,0.0006,0,1.10,0,-0.63)">0.32 seconds</span></div><div class="tr alt" style="top:469px;height:28px"><span class="c1" style="transform:matrix(1,0.0006,0,1.10,0,0.00)">Incoming Mail Traffic</span><span class="c2" style="transform:matrix(1,0.0006,0,1.10,0,0.00)">10.98 MiB</span></div><div class="tr" style="top:497px;height:28px"><span class="c1" style="transform:matrix(1,0.0006,0,1.10,0,-0.37)">Outgoing Mail Traffic</span><span class="c2" style="transform:matrix(1,0.0006,0,1.10,0,-0.37)">19.49 MiB</span></div></div><svg class="chart" style="left:237px;top:175.3px" width="756.6" height="292.5" viewBox="0 0 756.6 292.5"><path d="M63.57 11.00V237.00M78.15 11.00V237.00M92.73 11.00V237.00M107.30 11.00V237.00M121.88 11.00V237.00M136.45 11.00V237.00M151.02 11.00V237.00M165.60 11.00V237.00M180.18 11.00V237.00M194.75 11.00V237.00M209.33 11.00V237.00M223.90 11.00V237.00M238.48 11.00V237.00M253.05 11.00V237.00M267.62 11.00V237.00M282.20 11.00V237.00M296.77 11.00V237.00M311.35 11.00V237.00M325.92 11.00V237.00M340.50 11.00V237.00M355.08 11.00V237.00M369.65 11.00V237.00M384.23 11.00V237.00M398.80 11.00V237.00M413.38 11.00V237.00M427.95 11.00V237.00M442.53 11.00V237.00M457.10 11.00V237.00M471.67 11.00V237.00M486.25 11.00V237.00M500.83 11.00V237.00M515.40 11.00V237.00M529.97 11.00V237.00M544.55 11.00V237.00M559.12 11.00V237.00M573.70 11.00V237.00M588.27 11.00V237.00M602.85 11.00V237.00M617.43 11.00V237.00M632.00 11.00V237.00M646.58 11.00V237.00M661.15 11.00V237.00M675.73 11.00V237.00M690.30 11.00V237.00M704.88 11.00V237.00M719.45 11.00V237.00M734.03 11.00V237.00M748.60 11.00V237.00M49.00 214.40H748.60M49.00 191.80H748.60M49.00 169.20H748.60M49.00 146.60H748.60M49.00 124.00H748.60M49.00 101.40H748.60M49.00 78.80H748.60M49.00 56.20H748.60M49.00 33.60H748.60M49.00 11.00H748.60" stroke="#505050" stroke-width="1" fill="none"/><path d="M49.00 10.50V238.10M48.50 237.50H749.10M44.00 237.00H49.00M44.00 214.40H49.00M44.00 191.80H49.00M44.00 169.20H49.00M44.00 146.60H49.00M44.00 124.00H49.00M44.00 101.40H49.00M44.00 78.80H49.00M44.00 56.20H49.00M44.00 33.60H49.00M44.00 11.00H49.00M49.00 237.50v5.2M63.57 237.50v5.2M78.15 237.50v5.2M92.73 237.50v5.2M107.30 237.50v5.2M121.88 237.50v5.2M136.45 237.50v5.2M151.02 237.50v5.2M165.60 237.50v5.2M180.18 237.50v5.2M194.75 237.50v5.2M209.33 237.50v5.2M223.90 237.50v5.2M238.48 237.50v5.2M253.05 237.50v5.2M267.62 237.50v5.2M282.20 237.50v5.2M296.77 237.50v5.2M311.35 237.50v5.2M325.92 237.50v5.2M340.50 237.50v5.2M355.08 237.50v5.2M369.65 237.50v5.2M384.23 237.50v5.2M398.80 237.50v5.2M413.38 237.50v5.2M427.95 237.50v5.2M442.53 237.50v5.2M457.10 237.50v5.2M471.67 237.50v5.2M486.25 237.50v5.2M500.83 237.50v5.2M515.40 237.50v5.2M529.97 237.50v5.2M544.55 237.50v5.2M559.12 237.50v5.2M573.70 237.50v5.2M588.27 237.50v5.2M602.85 237.50v5.2M617.43 237.50v5.2M632.00 237.50v5.2M646.58 237.50v5.2M661.15 237.50v5.2M675.73 237.50v5.2M690.30 237.50v5.2M704.88 237.50v5.2M719.45 237.50v5.2M734.03 237.50v5.2M748.60 237.50v5.2" stroke="#1b5f96" stroke-width="1.25" fill="none"/><clipPath id="cp1"><rect x="49.00" y="-1.00" width="699.60" height="237.80"/></clipPath><g clip-path="url(#cp1)"><path d="M49.00 182.76 L78.15 173.72 L107.30 171.46 L136.45 185.02 L165.60 182.76 L194.75 173.72 L223.90 166.94 L253.05 169.20 L282.20 155.64 L311.35 87.84 L340.50 47.16 L369.65 20.04 L398.80 72.02 L427.95 85.58 L457.10 15.52 L486.25 119.48 L515.40 78.80 L544.55 72.02 L573.70 157.90 L602.85 237.00 L632.00 237.00 L661.15 237.00 L690.30 237.00 L719.45 237.00 L748.60 237.00L748.60 237.00L49.00 237.00Z" fill="#94ae0a" fill-opacity="0.6" stroke="none"/><path d="M49.00 182.76 L78.15 173.72 L107.30 171.46 L136.45 185.02 L165.60 182.76 L194.75 173.72 L223.90 166.94 L253.05 169.20 L282.20 155.64 L311.35 87.84 L340.50 47.16 L369.65 20.04 L398.80 72.02 L427.95 85.58 L457.10 15.52 L486.25 119.48 L515.40 78.80 L544.55 72.02 L573.70 157.90 L602.85 237.00 L632.00 237.00 L661.15 237.00 L690.30 237.00 L719.45 237.00 L748.60 237.00" fill="none" stroke="#576606" stroke-opacity="0.6" stroke-width="1.5" stroke-linejoin="round"/><path d="M49.00 187.28 L78.15 180.50 L107.30 178.24 L136.45 189.54 L165.60 185.02 L194.75 180.50 L223.90 178.24 L253.05 194.06 L282.20 175.98 L311.35 175.98 L340.50 169.20 L369.65 164.68 L398.80 182.76 L427.95 182.76 L457.10 166.94 L486.25 185.02 L515.40 185.02 L544.55 182.76 L573.70 191.80 L602.85 237.00 L632.00 237.00 L661.15 237.00 L690.30 237.00 L719.45 237.00 L748.60 237.00L748.60 237.00L49.00 237.00Z" fill="#115fa6" fill-opacity="0.6" stroke="none"/><path d="M49.00 187.28 L78.15 180.50 L107.30 178.24 L136.45 189.54 L165.60 185.02 L194.75 180.50 L223.90 178.24 L253.05 194.06 L282.20 175.98 L311.35 175.98 L340.50 169.20 L369.65 164.68 L398.80 182.76 L427.95 182.76 L457.10 166.94 L486.25 185.02 L515.40 185.02 L544.55 182.76 L573.70 191.80 L602.85 237.00 L632.00 237.00 L661.15 237.00 L690.30 237.00 L719.45 237.00 L748.60 237.00" fill="none" stroke="#0a3861" stroke-opacity="0.6" stroke-width="1.5" stroke-linejoin="round"/><path d="M49.00 232.48 L78.15 230.22 L107.30 230.22 L136.45 232.48 L165.60 234.74 L194.75 230.22 L223.90 225.70 L253.05 212.14 L282.20 216.66 L311.35 148.86 L340.50 114.96 L369.65 92.36 L398.80 126.26 L427.95 139.82 L457.10 85.58 L486.25 171.46 L515.40 130.78 L544.55 126.26 L573.70 203.10 L602.85 237.00 L632.00 237.00 L661.15 237.00 L690.30 237.00 L719.45 237.00 L748.60 237.00L748.60 237.00L49.00 237.00Z" fill="#a61120" fill-opacity="0.6" stroke="none"/><path d="M49.00 232.48 L78.15 230.22 L107.30 230.22 L136.45 232.48 L165.60 234.74 L194.75 230.22 L223.90 225.70 L253.05 212.14 L282.20 216.66 L311.35 148.86 L340.50 114.96 L369.65 92.36 L398.80 126.26 L427.95 139.82 L457.10 85.58 L486.25 171.46 L515.40 130.78 L544.55 126.26 L573.70 203.10 L602.85 237.00 L632.00 237.00 L661.15 237.00 L690.30 237.00 L719.45 237.00 L748.60 237.00" fill="none" stroke="#610a13" stroke-opacity="0.6" stroke-width="1.5" stroke-linejoin="round"/></g><text class="tk" x="24.90" y="241.80" text-anchor="middle">0</text><text class="tk" x="24.90" y="219.20" text-anchor="middle">10</text><text class="tk" x="24.90" y="196.60" text-anchor="middle">20</text><text class="tk" x="24.90" y="174.00" text-anchor="middle">30</text><text class="tk" x="24.90" y="151.40" text-anchor="middle">40</text><text class="tk" x="24.90" y="128.80" text-anchor="middle">50</text><text class="tk" x="24.90" y="106.20" text-anchor="middle">60</text><text class="tk" x="24.90" y="83.60" text-anchor="middle">70</text><text class="tk" x="24.90" y="61.00" text-anchor="middle">80</text><text class="tk" x="24.90" y="38.40" text-anchor="middle">90</text><text class="tk" x="24.90" y="15.80" text-anchor="middle">100</text><text class="tk" x="49.00" y="260.00" text-anchor="middle">2024-10-10</text><text class="tk" x="49.00" y="277.90" text-anchor="middle">00:00:00</text><text class="tk" x="136.45" y="260.00" text-anchor="middle">2024-10-10</text><text class="tk" x="136.45" y="277.90" text-anchor="middle">03:00:00</text><text class="tk" x="223.90" y="260.00" text-anchor="middle">2024-10-10</text><text class="tk" x="223.90" y="277.90" text-anchor="middle">06:00:00</text><text class="tk" x="311.35" y="260.00" text-anchor="middle">2024-10-10</text><text class="tk" x="311.35" y="277.90" text-anchor="middle">09:00:00</text><text class="tk" x="398.80" y="260.00" text-anchor="middle">2024-10-10</text><text class="tk" x="398.80" y="277.90" text-anchor="middle">12:00:00</text><text class="tk" x="486.25" y="260.00" text-anchor="middle">2024-10-10</text><text class="tk" x="486.25" y="277.90" text-anchor="middle">15:00:00</text><text class="tk" x="573.70" y="260.00" text-anchor="middle">2024-10-10</text><text class="tk" x="573.70" y="277.90" text-anchor="middle">18:00:00</text><text class="tk" x="661.15" y="260.00" text-anchor="middle">2024-10-10</text><text class="tk" x="661.15" y="277.90" text-anchor="middle">21:00:00</text><text class="tk" x="748.60" y="260.00" text-anchor="middle">2024-10-11</text><text class="tk" x="748.60" y="277.90" text-anchor="middle">00:00:00</text></svg>
<div class="panel" style="left:1007.3px;top:138px;width:759.7px;height:527px"><div class="ph"><span class="pttl">Incoming Mails</span><div class="legend" style="right:35.2px;top:4.6px"><div class="li" style="width:133.3px"><span class="dot" style="background:#94ae0a"></span><span class="lt">Incoming Mails</span></div><div class="li" style="width:107.3px"><span class="dot" style="background:#115fa6"></span><span class="lt">Junk Mails</span></div><div class="li" style="width:108.7px"><span class="dot" style="background:#a61120"></span><span class="lt">Virus Mails</span></div><div class="li" style="width:94.3px"><span class="dot" style="background:#ff8809"></span><span class="lt">Bounces</span></div></div><svg class="tool" viewBox="0 0 20 20"><circle cx="10" cy="10" r="8.3" fill="none" stroke="#2f4f57" stroke-width="1.3"/><path d="M5 10H15" stroke="#2f4f57" stroke-width="1.3"/></svg></div><div class="pbody"></div><div class="sep" style="top:330.00px"></div><div class="tr first" style="top:331px;height:28px"><span class="c1" style="transform:matrix(1,0.0006,0,1.10,0,-0.15)">Incoming Mails</span><span class="c2" style="transform:matrix(1,0.0006,0,1.10,0,-0.15)">472</span><div class="pb"><div class="pf" style="width:309px"></div><span class="pt" style="transform:matrix(1,0.0006,0,1.10,0,-0.15)">100%</span></div></div><div class="tr alt" style="top:359px;height:28px"><span class="c1" style="transform:matrix(1,0.0006,0,1.10,0,-0.52)">Junk Mails</span><span class="c2" style="transform:matrix(1,0.0006,0,1.10,0,-0.52)">381</span><div class="pb"><div class="pf" style="width:249.5px"></div><span class="pt" style="transform:matrix(1,0.0006,0,1.10,0,-0.52)">81%</span></div></div><div class="tr" style="top:387px;height:27px"><span class="c1" style="transform:matrix(1,0.0006,0,1.10,0,-0.89)">Greylisted Mails</span><span class="c2" style="transform:matrix(1,0.0006,0,1.10,0,-0.89)">0</span><div class="pb"><div class="pf" style="width:0px"></div><span class="pt" style="transform:matrix(1,0.0006,0,1.10,0,-0.89)">0%</span></div></div><div class="tr alt" style="top:414px;height:28px"><span class="c1" style="transform:matrix(1,0.0006,0,1.10,0,-0.26)">Spam Mails</span><span class="c2" style="transform:matrix(1,0.0006,0,1.10,0,-0.26)">13</span><div class="pb"><div class="pf" style="width:9px"></div><span class="pt" style="transform:matrix(1,0.0006,0,1.10,0,-0.26)">3%</span></div></div><div class="tr" style="top:442px;height:27px"><span class="c1" style="transform:matrix(1,0.0006,0,1.10,0,-0.63)">SPF rejects</span><span class="c2" style="transform:matrix(1,0.0006,0,1.10,0,-0.63)">4</span><div class="pb"><div class="pf" style="width:2.5px"></div><span class="pt" style="transform:matrix(1,0.0006,0,1.10,0,-0.63)">1%</span></div></div><div class="tr alt" style="top:469px;height:28px"><span class="c1" style="transform:matrix(1,0.0006,0,1.10,0,0.00)">Bounces</span><span class="c2" style="transform:matrix(1,0.0006,0,1.10,0,0.00)">0</span><div class="pb"><div class="pf" style="width:0px"></div><span class="pt" style="transform:matrix(1,0.0006,0,1.10,0,0.00)">0%</span></div></div><div class="tr" style="top:497px;height:28px"><span class="c1" style="transform:matrix(1,0.0006,0,1.10,0,-0.37)">Virus Mails</span><span class="c2" style="transform:matrix(1,0.0006,0,1.10,0,-0.37)">0</span><div class="pb"><div class="pf" style="width:0px"></div><span class="pt" style="transform:matrix(1,0.0006,0,1.10,0,-0.37)">0%</span></div></div></div><svg class="chart" style="left:1008px;top:175.3px" width="756.6" height="292.5" viewBox="0 0 756.6 292.5"><path d="M56.44 11.00V237.00M71.17 11.00V237.00M85.91 11.00V237.00M100.64 11.00V237.00M115.38 11.00V237.00M130.11 11.00V237.00M144.85 11.00V237.00M159.58 11.00V237.00M174.32 11.00V237.00M189.05 11.00V237.00M203.79 11.00V237.00M218.53 11.00V237.00M233.26 11.00V237.00M248.00 11.00V237.00M262.73 11.00V237.00M277.47 11.00V237.00M292.20 11.00V237.00M306.94 11.00V237.00M321.67 11.00V237.00M336.41 11.00V237.00M351.14 11.00V237.00M365.88 11.00V237.00M380.61 11.00V237.00M395.35 11.00V237.00M410.09 11.00V237.00M424.82 11.00V237.00M439.56 11.00V237.00M454.29 11.00V237.00M469.03 11.00V237.00M483.76 11.00V237.00M498.50 11.00V237.00M513.23 11.00V237.00M527.97 11.00V237.00M542.70 11.00V237.00M557.44 11.00V237.00M572.18 11.00V237.00M586.91 11.00V237.00M601.65 11.00V237.00M616.38 11.00V237.00M631.12 11.00V237.00M645.85 11.00V237.00M660.59 11.00V237.00M675.32 11.00V237.00M690.06 11.00V237.00M704.79 11.00V237.00M719.53 11.00V237.00M734.26 11.00V237.00M749.00 11.00V237.00M41.70 204.71H749.00M41.70 172.43H749.00M41.70 140.14H749.00M41.70 107.86H749.00M41.70 75.57H749.00M41.70 43.29H749.00M41.70 11.00H749.00" stroke="#505050" stroke-width="1" fill="none"/><path d="M41.70 10.50V238.10M41.20 237.50H749.50M36.70 237.00H41.70M36.70 204.71H41.70M36.70 172.43H41.70M36.70 140.14H41.70M36.70 107.86H41.70M36.70 75.57H41.70M36.70 43.29H41.70M36.70 11.00H41.70M41.70 237.50v5.2M56.44 237.50v5.2M71.17 237.50v5.2M85.91 237.50v5.2M100.64 237.50v5.2M115.38 237.50v5.2M130.11 237.50v5.2M144.85 237.50v5.2M159.58 237.50v5.2M174.32 237.50v5.2M189.05 237.50v5.2M203.79 237.50v5.2M218.53 237.50v5.2M233.26 237.50v5.2M248.00 237.50v5.2M262.73 237.50v5.2M277.47 237.50v5.2M292.20 237.50v5.2M306.94 237.50v5.2M321.67 237.50v5.2M336.41 237.50v5.2M351.14 237.50v5.2M365.88 237.50v5.2M380.61 237.50v5.2M395.35 237.50v5.2M410.09 237.50v5.2M424.82 237.50v5.2M439.56 237.50v5.2M454.29 237.50v5.2M469.03 237.50v5.2M483.76 237.50v5.2M498.50 237.50v5.2M513.23 237.50v5.2M527.97 237.50v5.2M542.70 237.50v5.2M557.44 237.50v5.2M572.18 237.50v5.2M586.91 237.50v5.2M601.65 237.50v5.2M616.38 237.50v5.2M631.12 237.50v5.2M645.85 237.50v5.2M660.59 237.50v5.2M675.32 237.50v5.2M690.06 237.50v5.2M704.79 237.50v5.2M719.53 237.50v5.2M734.26 237.50v5.2M749.00 237.50v5.2" stroke="#1b5f96" stroke-width="1.25" fill="none"/><clipPath id="cp2"><rect x="41.70" y="-1.00" width="707.30" height="237.80"/></clipPath><g clip-path="url(#cp2)"><path d="M41.70 94.94 L71.17 75.57 L100.64 69.11 L130.11 101.40 L159.58 88.49 L189.05 75.57 L218.53 69.11 L248.00 114.31 L277.47 62.66 L306.94 62.66 L336.41 43.29 L365.88 30.37 L395.35 82.03 L424.82 82.03 L454.29 36.83 L483.76 88.49 L513.23 88.49 L542.70 82.03 L572.18 107.86 L601.65 237.00 L631.12 237.00 L660.59 237.00 L690.06 237.00 L719.53 237.00 L749.00 237.00L749.00 237.00L41.70 237.00Z" fill="#94ae0a" fill-opacity="0.6" stroke="none"/><path d="M41.70 94.94 L71.17 75.57 L100.64 69.11 L130.11 101.40 L159.58 88.49 L189.05 75.57 L218.53 69.11 L248.00 114.31 L277.47 62.66 L306.94 62.66 L336.41 43.29 L365.88 30.37 L395.35 82.03 L424.82 82.03 L454.29 36.83 L483.76 88.49 L513.23 88.49 L542.70 82.03 L572.18 107.86 L601.65 237.00 L631.12 237.00 L660.59 237.00 L690.06 237.00 L719.53 237.00 L749.00 237.00" fill="none" stroke="#576606" stroke-opacity="0.6" stroke-width="1.5" stroke-linejoin="round"/><path d="M41.70 114.31 L71.17 107.86 L100.64 94.94 L130.11 114.31 L159.58 101.40 L189.05 88.49 L218.53 114.31 L248.00 114.31 L277.47 107.86 L306.94 101.40 L336.41 94.94 L365.88 101.40 L395.35 114.31 L424.82 101.40 L454.29 94.94 L483.76 107.86 L513.23 107.86 L542.70 107.86 L572.18 153.06 L601.65 237.00 L631.12 237.00 L660.59 237.00 L690.06 237.00 L719.53 237.00 L749.00 237.00L749.00 237.00L41.70 237.00Z" fill="#115fa6" fill-opacity="0.6" stroke="none"/><path d="M41.70 114.31 L71.17 107.86 L100.64 94.94 L130.11 114.31 L159.58 101.40 L189.05 88.49 L218.53 114.31 L248.00 114.31 L277.47 107.86 L306.94 101.40 L336.41 94.94 L365.88 101.40 L395.35 114.31 L424.82 101.40 L454.29 94.94 L483.76 107.86 L513.23 107.86 L542.70 107.86 L572.18 153.06 L601.65 237.00 L631.12 237.00 L660.59 237.00 L690.06 237.00 L719.53 237.00 L749.00 237.00" fill="none" stroke="#0a3861" stroke-opacity="0.6" stroke-width="1.5" stroke-linejoin="round"/><path d="M41.70 237.00 L71.17 237.00 L100.64 237.00 L130.11 237.00 L159.58 237.00 L189.05 237.00 L218.53 237.00 L248.00 237.00 L277.47 237.00 L306.94 237.00 L336.41 237.00 L365.88 237.00 L395.35 237.00 L424.82 237.00 L454.29 237.00 L483.76 237.00 L513.23 237.00 L542.70 237.00 L572.18 237.00 L601.65 237.00 L631.12 237.00 L660.59 237.00 L690.06 237.00 L719.53 237.00 L749.00 237.00L749.00 237.00L41.70 237.00Z" fill="#a61120" fill-opacity="0.6" stroke="none"/><path d="M41.70 237.00 L71.17 237.00 L100.64 237.00 L130.11 237.00 L159.58 237.00 L189.05 237.00 L218.53 237.00 L248.00 237.00 L277.47 237.00 L306.94 237.00 L336.41 237.00 L365.88 237.00 L395.35 237.00 L424.82 237.00 L454.29 237.00 L483.76 237.00 L513.23 237.00 L542.70 237.00 L572.18 237.00 L601.65 237.00 L631.12 237.00 L660.59 237.00 L690.06 237.00 L719.53 237.00 L749.00 237.00" fill="none" stroke="#610a13" stroke-opacity="0.6" stroke-width="1.5" stroke-linejoin="round"/><path d="M41.70 237.00 L71.17 237.00 L100.64 237.00 L130.11 237.00 L159.58 237.00 L189.05 237.00 L218.53 237.00 L248.00 237.00 L277.47 237.00 L306.94 237.00 L336.41 237.00 L365.88 237.00 L395.35 237.00 L424.82 237.00 L454.29 237.00 L483.76 237.00 L513.23 237.00 L542.70 237.00 L572.18 237.00 L601.65 237.00 L631.12 237.00 L660.59 237.00 L690.06 237.00 L719.53 237.00 L749.00 237.00L749.00 237.00L41.70 237.00Z" fill="#ff8809" fill-opacity="0.6" stroke="none"/><path d="M41.70 237.00 L71.17 237.00 L100.64 237.00 L130.11 237.00 L159.58 237.00 L189.05 237.00 L218.53 237.00 L248.00 237.00 L277.47 237.00 L306.94 237.00 L336.41 237.00 L365.88 237.00 L395.35 237.00 L424.82 237.00 L454.29 237.00 L483.76 237.00 L513.23 237.00 L542.70 237.00 L572.18 237.00 L601.65 237.00 L631.12 237.00 L660.59 237.00 L690.06 237.00 L719.53 237.00 L749.00 237.00" fill="none" stroke="#c86a00" stroke-opacity="0.6" stroke-width="1.5" stroke-linejoin="round"/><circle cx="631.12" cy="237.00" r="7.2" fill="#ff8c0f"/></g><text class="tk" x="19.90" y="241.80" text-anchor="middle">0</text><text class="tk" x="19.90" y="209.51" text-anchor="middle">5</text><text class="tk" x="19.90" y="177.23" text-anchor="middle">10</text><text class="tk" x="19.90" y="144.94" text-anchor="middle">15</text><text class="tk" x="19.90" y="112.66" text-anchor="middle">20</text><text class="tk" x="19.90" y="80.37" text-anchor="middle">25</text><text class="tk" x="19.90" y="48.09" text-anchor="middle">30</text><text class="tk" x="19.90" y="15.80" text-anchor="middle">35</text><text class="tk" x="41.70" y="260.00" text-anchor="middle">2024-10-10</text><text class="tk" x="41.70" y="277.90" text-anchor="middle">00:00:00</text><text class="tk" x="130.11" y="260.00" text-anchor="middle">2024-10-10</text><text class="tk" x="130.11" y="277.90" text-anchor="middle">03:00:00</text><text class="tk" x="218.53" y="260.00" text-anchor="middle">2024-10-10</text><text class="tk" x="218.53" y="277.90" text-anchor="middle">06:00:00</text><text class="tk" x="306.94" y="260.00" text-anchor="middle">2024-10-10</text><text class="tk" x="306.94" y="277.90" text-anchor="middle">09:00:00</text><text class="tk" x="395.35" y="260.00" text-anchor="middle">2024-10-10</text><text class="tk" x="395.35" y="277.90" text-anchor="middle">12:00:00</text><text class="tk" x="483.76" y="260.00" text-anchor="middle">2024-10-10</text><text class="tk" x="483.76" y="277.90" text-anchor="middle">15:00:00</text><text class="tk" x="572.18" y="260.00" text-anchor="middle">2024-10-10</text><text class="tk" x="572.18" y="277.90" text-anchor="middle">18:00:00</text><text class="tk" x="660.59" y="260.00" text-anchor="middle">2024-10-10</text><text class="tk" x="660.59" y="277.90" text-anchor="middle">21:00:00</text><text class="tk" x="749.00" y="260.00" text-anchor="middle">2024-10-11</text><text class="tk" x="749.00" y="277.90" text-anchor="middle">00:00:00</text></svg>
<div class="panel" style="left:236.3px;top:676px;width:759.7px;height:416.6px"><div class="ph"><span class="pttl">Outgoing Mails</span><div class="legend" style="right:35.2px;top:4.6px"><div class="li" style="width:134px"><span class="dot" style="background:#94ae0a"></span><span class="lt">Outgoing Mails</span></div><div class="li" style="width:110px"><span class="dot" style="background:#115fa6"></span><span class="lt">Virus Mails</span></div><div class="li" style="width:93px"><span class="dot" style="background:#a61120"></span><span class="lt">Bounces</span></div></div><svg class="tool" viewBox="0 0 20 20"><circle cx="10" cy="10" r="8.3" fill="none" stroke="#2f4f57" stroke-width="1.3"/><path d="M5 10H15" stroke="#2f4f57" stroke-width="1.3"/></svg></div><div class="pbody"></div><div class="sep" style="top:330.00px"></div><div class="tr first" style="top:331px;height:28px"><span class="c1" style="transform:matrix(1,0.0006,0,1.10,0,-0.15)">Outgoing Mails</span><span class="c2" style="transform:matrix(1,0.0006,0,1.10,0,-0.15)">495</span><div class="pb"><div class="pf" style="width:309px"></div><span class="pt" style="transform:matrix(1,0.0006,0,1.10,0,-0.15)">100%</span></div></div><div class="tr alt" style="top:359px;height:28px"><span class="c1" style="transform:matrix(1,0.0006,0,1.10,0,-0.52)">Bounces</span><span class="c2" style="transform:matrix(1,0.0006,0,1.10,0,-0.52)">9</span><div class="pb"><div class="pf" style="width:6px"></div><span class="pt" style="transform:matrix(1,0.0006,0,1.10,0,-0.52)">2%</span></div></div><div class="tr" style="top:387px;height:27px"><span class="c1" style="transform:matrix(1,0.0006,0,1.10,0,-0.89)">Virus Mails</span><span class="c2" style="transform:matrix(1,0.0006,0,1.10,0,-0.89)">0</span><div class="pb"><div class="pf" style="width:0px"></div><span class="pt" style="transform:matrix(1,0.0006,0,1.10,0,-0.89)">0%</span></div></div></div><svg class="chart" style="left:237px;top:713.3px" width="756.6" height="292.5" viewBox="0 0 756.6 292.5"><path d="M56.52 10.60V236.60M71.24 10.60V236.60M85.96 10.60V236.60M100.68 10.60V236.60M115.39 10.60V236.60M130.11 10.60V236.60M144.83 10.60V236.60M159.55 10.60V236.60M174.27 10.60V236.60M188.99 10.60V236.60M203.71 10.60V236.60M218.43 10.60V236.60M233.14 10.60V236.60M247.86 10.60V236.60M262.58 10.60V236.60M277.30 10.60V236.60M292.02 10.60V236.60M306.74 10.60V236.60M321.46 10.60V236.60M336.17 10.60V236.60M350.89 10.60V236.60M365.61 10.60V236.60M380.33 10.60V236.60M395.05 10.60V236.60M409.77 10.60V236.60M424.49 10.60V236.60M439.21 10.60V236.60M453.92 10.60V236.60M468.64 10.60V236.60M483.36 10.60V236.60M498.08 10.60V236.60M512.80 10.60V236.60M527.52 10.60V236.60M542.24 10.60V236.60M556.96 10.60V236.60M571.67 10.60V236.60M586.39 10.60V236.60M601.11 10.60V236.60M615.83 10.60V236.60M630.55 10.60V236.60M645.27 10.60V236.60M659.99 10.60V236.60M674.71 10.60V236.60M689.42 10.60V236.60M704.14 10.60V236.60M718.86 10.60V236.60M733.58 10.60V236.60M748.30 10.60V236.60M41.80 204.31H748.30M41.80 172.03H748.30M41.80 139.74H748.30M41.80 107.46H748.30M41.80 75.17H748.30M41.80 42.89H748.30M41.80 10.60H748.30" stroke="#505050" stroke-width="1" fill="none"/><path d="M41.80 10.10V237.70M41.30 237.10H748.80M36.80 236.60H41.80M36.80 204.31H41.80M36.80 172.03H41.80M36.80 139.74H41.80M36.80 107.46H41.80M36.80 75.17H41.80M36.80 42.89H41.80M36.80 10.60H41.80M41.80 237.10v5.2M56.52 237.10v5.2M71.24 237.10v5.2M85.96 237.10v5.2M100.68 237.10v5.2M115.39 237.10v5.2M130.11 237.10v5.2M144.83 237.10v5.2M159.55 237.10v5.2M174.27 237.10v5.2M188.99 237.10v5.2M203.71 237.10v5.2M218.43 237.10v5.2M233.14 237.10v5.2M247.86 237.10v5.2M262.58 237.10v5.2M277.30 237.10v5.2M292.02 237.10v5.2M306.74 237.10v5.2M321.46 237.10v5.2M336.17 237.10v5.2M350.89 237.10v5.2M365.61 237.10v5.2M380.33 237.10v5.2M395.05 237.10v5.2M409.77 237.10v5.2M424.49 237.10v5.2M439.21 237.10v5.2M453.92 237.10v5.2M468.64 237.10v5.2M483.36 237.10v5.2M498.08 237.10v5.2M512.80 237.10v5.2M527.52 237.10v5.2M542.24 237.10v5.2M556.96 237.10v5.2M571.67 237.10v5.2M586.39 237.10v5.2M601.11 237.10v5.2M615.83 237.10v5.2M630.55 237.10v5.2M645.27 237.10v5.2M659.99 237.10v5.2M674.71 237.10v5.2M689.42 237.10v5.2M704.14 237.10v5.2M718.86 237.10v5.2M733.58 237.10v5.2M748.30 237.10v5.2" stroke="#1b5f96" stroke-width="1.25" fill="none"/><clipPath id="cp3"><rect x="41.80" y="-1.40" width="706.50" height="237.80"/></clipPath><g clip-path="url(#cp3)"><path d="M41.80 230.14 L71.24 226.91 L100.68 226.91 L130.11 230.14 L159.55 233.37 L188.99 226.91 L218.43 220.46 L247.86 201.09 L277.30 207.54 L306.74 110.69 L336.17 62.26 L365.61 29.97 L395.05 78.40 L424.49 97.77 L453.92 20.29 L483.36 142.97 L512.80 84.86 L542.24 78.40 L571.67 188.17 L601.11 236.60 L630.55 236.60 L659.99 236.60 L689.42 236.60 L718.86 236.60 L748.30 236.60L748.30 236.60L41.80 236.60Z" fill="#94ae0a" fill-opacity="0.6" stroke="none"/><path d="M41.80 230.14 L71.24 226.91 L100.68 226.91 L130.11 230.14 L159.55 233.37 L188.99 226.91 L218.43 220.46 L247.86 201.09 L277.30 207.54 L306.74 110.69 L336.17 62.26 L365.61 29.97 L395.05 78.40 L424.49 97.77 L453.92 20.29 L483.36 142.97 L512.80 84.86 L542.24 78.40 L571.67 188.17 L601.11 236.60 L630.55 236.60 L659.99 236.60 L689.42 236.60 L718.86 236.60 L748.30 236.60" fill="none" stroke="#576606" stroke-opacity="0.6" stroke-width="1.5" stroke-linejoin="round"/><path d="M41.80 236.60 L71.24 236.60 L100.68 236.60 L130.11 236.60 L159.55 236.60 L188.99 236.60 L218.43 236.60 L247.86 236.60 L277.30 236.60 L306.74 236.60 L336.17 236.60 L365.61 236.60 L395.05 236.60 L424.49 236.60 L453.92 236.60 L483.36 236.60 L512.80 236.60 L542.24 236.60 L571.67 236.60 L601.11 236.60 L630.55 236.60 L659.99 236.60 L689.42 236.60 L718.86 236.60 L748.30 236.60L748.30 236.60L41.80 236.60Z" fill="#115fa6" fill-opacity="0.6" stroke="none"/><path d="M41.80 236.60 L71.24 236.60 L100.68 236.60 L130.11 236.60 L159.55 236.60 L188.99 236.60 L218.43 236.60 L247.86 236.60 L277.30 236.60 L306.74 236.60 L336.17 236.60 L365.61 236.60 L395.05 236.60 L424.49 236.60 L453.92 236.60 L483.36 236.60 L512.80 236.60 L542.24 236.60 L571.67 236.60 L601.11 236.60 L630.55 236.60 L659.99 236.60 L689.42 236.60 L718.86 236.60 L748.30 236.60" fill="none" stroke="#0a3861" stroke-opacity="0.6" stroke-width="1.5" stroke-linejoin="round"/><path d="M41.80 236.60 L71.24 236.60 L100.68 236.60 L130.11 236.60 L159.55 236.60 L188.99 236.60 L218.43 233.37 L247.86 233.37 L277.30 236.60 L306.74 233.37 L336.17 233.37 L365.61 233.37 L395.05 236.60 L424.49 236.60 L453.92 233.37 L483.36 233.37 L512.80 233.37 L542.24 233.37 L571.67 236.60 L601.11 236.60 L630.55 236.60 L659.99 236.60 L689.42 236.60 L718.86 236.60 L748.30 236.60L748.30 236.60L41.80 236.60Z" fill="#a61120" fill-opacity="0.6" stroke="none"/><path d="M41.80 236.60 L71.24 236.60 L100.68 236.60 L130.11 236.60 L159.55 236.60 L188.99 236.60 L218.43 233.37 L247.86 233.37 L277.30 236.60 L306.74 233.37 L336.17 233.37 L365.61 233.37 L395.05 236.60 L424.49 236.60 L453.92 233.37 L483.36 233.37 L512.80 233.37 L542.24 233.37 L571.67 236.60 L601.11 236.60 L630.55 236.60 L659.99 236.60 L689.42 236.60 L718.86 236.60 L748.30 236.60" fill="none" stroke="#610a13" stroke-opacity="0.6" stroke-width="1.5" stroke-linejoin="round"/><circle cx="336.17" cy="62.26" r="6.4" fill="#a9c218"/></g><text class="tk" x="20.30" y="241.40" text-anchor="middle">0</text><text class="tk" x="20.30" y="209.11" text-anchor="middle">10</text><text class="tk" x="20.30" y="176.83" text-anchor="middle">20</text><text class="tk" x="20.30" y="144.54" text-anchor="middle">30</text><text class="tk" x="20.30" y="112.26" text-anchor="middle">40</text><text class="tk" x="20.30" y="79.97" text-anchor="middle">50</text><text class="tk" x="20.30" y="47.69" text-anchor="middle">60</text><text class="tk" x="20.30" y="15.40" text-anchor="middle">70</text><text class="tk" x="41.80" y="259.60" text-anchor="middle">2024-10-10</text><text class="tk" x="41.80" y="277.50" text-anchor="middle">00:00:00</text><text class="tk" x="130.11" y="259.60" text-anchor="middle">2024-10-10</text><text class="tk" x="130.11" y="277.50" text-anchor="middle">03:00:00</text><text class="tk" x="218.43" y="259.60" text-anchor="middle">2024-10-10</text><text class="tk" x="218.43" y="277.50" text-anchor="middle">06:00:00</text><text class="tk" x="306.74" y="259.60" text-anchor="middle">2024-10-10</text><text class="tk" x="306.74" y="277.50" text-anchor="middle">09:00:00</text><text class="tk" x="395.05" y="259.60" text-anchor="middle">2024-10-10</text><text class="tk" x="395.05" y="277.50" text-anchor="middle">12:00:00</text><text class="tk" x="483.36" y="259.60" text-anchor="middle">2024-10-10</text><text class="tk" x="483.36" y="277.50" text-anchor="middle">15:00:00</text><text class="tk" x="571.67" y="259.60" text-anchor="middle">2024-10-10</text><text class="tk" x="571.67" y="277.50" text-anchor="middle">18:00:00</text><text class="tk" x="659.99" y="259.60" text-anchor="middle">2024-10-10</text><text class="tk" x="659.99" y="277.50" text-anchor="middle">21:00:00</text><text class="tk" x="748.30" y="259.60" text-anchor="middle">2024-10-11</text><text class="tk" x="748.30" y="277.50" text-anchor="middle">00:00:00</text></svg>
</body></html>
